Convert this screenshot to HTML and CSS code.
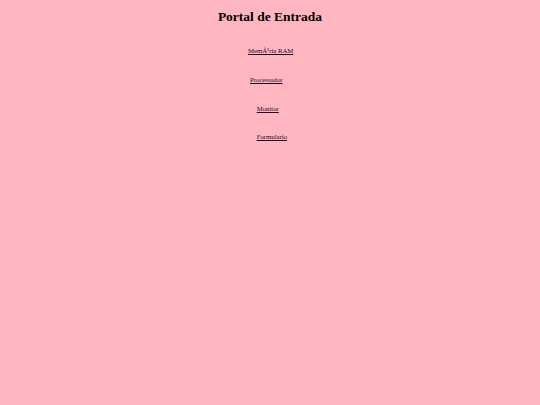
FILE: index.html
```html
<!DOCTYPE html>
<html>
<head>
<meta charset="utf-8">
<link rel="stylesheet" href="styles.css">
</head>
<body>
<h1 class="title">Portal de Entrada</h1>
<nav class="menu">
<a class="item" href="#">MemÃ³ria RAM</a>
<a class="item item-2" href="#">Processador</a>
<a class="item item-3" href="#">Monitor</a>
<a class="item item-3 item-last" href="#">Formulario</a>
</nav>
</body>
</html>
```
FILE: styles.css
```css
html, body {
  margin: 0;
  padding: 0;
  background: #ffb6c1;
}
body {
  font-family: "Liberation Serif", "Times New Roman", serif;
  padding-top: 9px;
}
.title {
  margin: 0;
  text-align: center;
  font-size: 13.5px;
  line-height: 15px;
  font-weight: bold;
  color: #000;
}
.menu {
  display: flex;
  flex-direction: column;
  align-items: flex-start;
  gap: 21px;
  margin-top: 23px;
  padding-left: 248px;
}
.item {
  font-size: 6.75px;
  line-height: 8px;
  color: #1a0a2e;
  text-decoration: underline;
}
.item-2 {
  margin-left: 2px;
}
.item-3 {
  margin-left: 8.7px;
}
.item-last {
  margin-top: -1px;
}
```
